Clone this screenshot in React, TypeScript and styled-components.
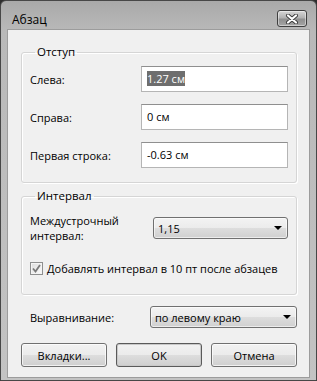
import React from 'react'
import styled, { createGlobalStyle } from 'styled-components'

const GlobalStyle = createGlobalStyle`
  html, body {
    margin: 0;
    padding: 0;
    background: #2e2e2e;
  }
  * {
    box-sizing: border-box;
  }
`

const Window = styled.div`
  width: 317px;
  height: 381px;
  display: flex;
  flex-direction: column;
  border: 1px solid #474747;
  border-radius: 6px 6px 0 0;
  padding: 0 7px 3px 7px;
  background: linear-gradient(180deg, #a9a9a9 0px, #b9b9b9 30px, #c3c3c3 100%);
  font-family: 'Open Sans', 'Noto Sans', sans-serif;
  font-size: 11px;
  color: #000;
`

const TitleBar = styled.div`
  height: 29px;
  display: flex;
  align-items: flex-start;
  justify-content: space-between;
`

const Title = styled.div`
  margin: 11px 0 0 4px;
  line-height: 16px;
  font-size: 12px;
`

const CloseButton = styled.div`
  width: 30px;
  height: 17px;
  margin: 9px 2px 0 0;
  border: 1px solid #3f3f3f;
  border-radius: 3px;
  background: linear-gradient(180deg, #d6d6d6 0%, #b2b2b2 45%, #8f8f8f 55%, #a5a5a5 100%);
  box-shadow: inset 0 0 0 1px rgba(255, 255, 255, 0.45);
  display: flex;
  align-items: center;
  justify-content: center;
`

const Client = styled.div`
  flex: 1;
  display: flex;
  flex-direction: column;
  background: #f0f0f0;
  box-shadow: 0 0 0 1px #9c9c9c;
  padding: 15px 12px 0 13px;
`

const Group = styled.fieldset<{ $top?: number }>`
  margin: ${p => p.$top || 0}px 0 0 0;
  padding: 7px 8px 14px 8px;
  border: 1px solid #d5d5d5;
  border-radius: 3px;
  box-shadow: inset 1px 1px 0 #ffffff, 1px 1px 0 #ffffff;
  min-width: 0;
`

const Legend = styled.legend`
  padding: 0 2px;
  margin-left: 5px;
  line-height: 14px;
  font-size: 11.5px;
`

const Rows = styled.div`
  display: grid;
  grid-template-columns: 111px 147px;
  row-gap: 12px;
  align-items: center;
`

const Label = styled.div`
  line-height: 15px;
`

const TextBox = styled.div`
  height: 26px;
  padding: 4px 5px 0;
  background: #fff;
  border: 1px solid #b5b5b5;
  border-top-color: #8f8f8f;
  line-height: 15px;
  white-space: nowrap;
`

const Selected = styled.span`
  background: #6e6e6e;
  color: #fff;
`

const Select = styled.div<{ $width: number }>`
  width: ${p => p.$width}px;
  height: 22px;
  display: flex;
  align-items: center;
  justify-content: space-between;
  padding: 0 5px 0 4px;
  border: 1px solid #707070;
  border-radius: 3px;
  background: linear-gradient(180deg, #f3f3f3 0%, #ebebeb 50%, #dddddd 51%, #d0d0d0 100%);
  box-shadow: inset 0 0 0 1px rgba(255, 255, 255, 0.6);
  white-space: nowrap;
`

const Arrow = styled.div`
  width: 0;
  height: 0;
  border-left: 4px solid transparent;
  border-right: 4px solid transparent;
  border-top: 4px solid #000;
`

const SpacingRow = styled.div`
  display: flex;
  align-items: center;
  justify-content: space-between;
`

const CheckRow = styled.label`
  margin-top: 18px;
  display: flex;
  align-items: center;
  gap: 4px;
  line-height: 15px;
  white-space: nowrap;
`

const CheckBox = styled.div`
  width: 13px;
  height: 13px;
  border: 1px solid #8e8f8f;
  background: linear-gradient(135deg, #dcdcdc 0%, #fbfbfb 100%);
  box-shadow: inset 0 0 0 1px #f4f4f4;
  display: flex;
  align-items: center;
  justify-content: center;
`

const AlignRow = styled.div`
  margin: 11px 0 0 9px;
  display: flex;
  align-items: center;
  justify-content: space-between;
`

const Buttons = styled.div`
  margin-top: 15px;
  display: flex;
  justify-content: space-between;
`

const Button = styled.button<{ $default?: boolean }>`
  width: 86px;
  height: 24px;
  padding: 0;
  font-family: inherit;
  font-size: 11px;
  color: #000;
  border: 1px solid ${p => (p.$default ? '#5a5a5a' : '#707070')};
  border-radius: 3px;
  background: linear-gradient(180deg, #f2f2f2 0%, #ebebeb 50%, #dddddd 51%, #cfcfcf 100%);
  box-shadow: inset 0 0 0 1px ${p => (p.$default ? '#c9c9c9' : 'rgba(255, 255, 255, 0.7)')};
`

const App = () => {
  return (
    <>
      <GlobalStyle />
      <Window>
        <TitleBar>
          <Title>Абзац</Title>
          <CloseButton>
            <svg width='14' height='10' viewBox='0 0 14 10'>
              <path d='M3 1.5 L11 8.5 M11 1.5 L3 8.5' stroke='#3a3a3a' strokeWidth='4' strokeLinecap='round' />
              <path d='M3 1.5 L11 8.5 M11 1.5 L3 8.5' stroke='#ffffff' strokeWidth='2.2' strokeLinecap='round' />
            </svg>
          </CloseButton>
        </TitleBar>
        <Client>
          <Group>
            <Legend>Отступ</Legend>
            <Rows>
              <Label>Слева:</Label>
              <TextBox><Selected>1.27 см</Selected></TextBox>
              <Label>Справа:</Label>
              <TextBox>0 см</TextBox>
              <Label>Первая строка:</Label>
              <TextBox>-0.63 см</TextBox>
            </Rows>
          </Group>
          <Group $top={6} style={{ paddingTop: 10, paddingBottom: 18 }}>
            <Legend>Интервал</Legend>
            <SpacingRow>
              <Label>Междустрочный<br />интервал:</Label>
              <Select $width={135}>
                1,15
                <Arrow />
              </Select>
            </SpacingRow>
            <CheckRow>
              <CheckBox>
                <svg width='9' height='9' viewBox='0 0 9 9'>
                  <path d='M1 4.5 L3.5 7.5 L8 1' stroke='#7a7a7a' strokeWidth='1.8' fill='none' />
                </svg>
              </CheckBox>
              Добавлять интервал в 10 пт после абзацев
            </CheckRow>
          </Group>
          <AlignRow>
            <Label>Выравнивание:</Label>
            <Select $width={147}>
              по левому краю
              <Arrow />
            </Select>
          </AlignRow>
          <Buttons>
            <Button>Вкладки...</Button>
            <Button $default>OK</Button>
            <Button>Отмена</Button>
          </Buttons>
        </Client>
      </Window>
    </>
  )
}

export default App
